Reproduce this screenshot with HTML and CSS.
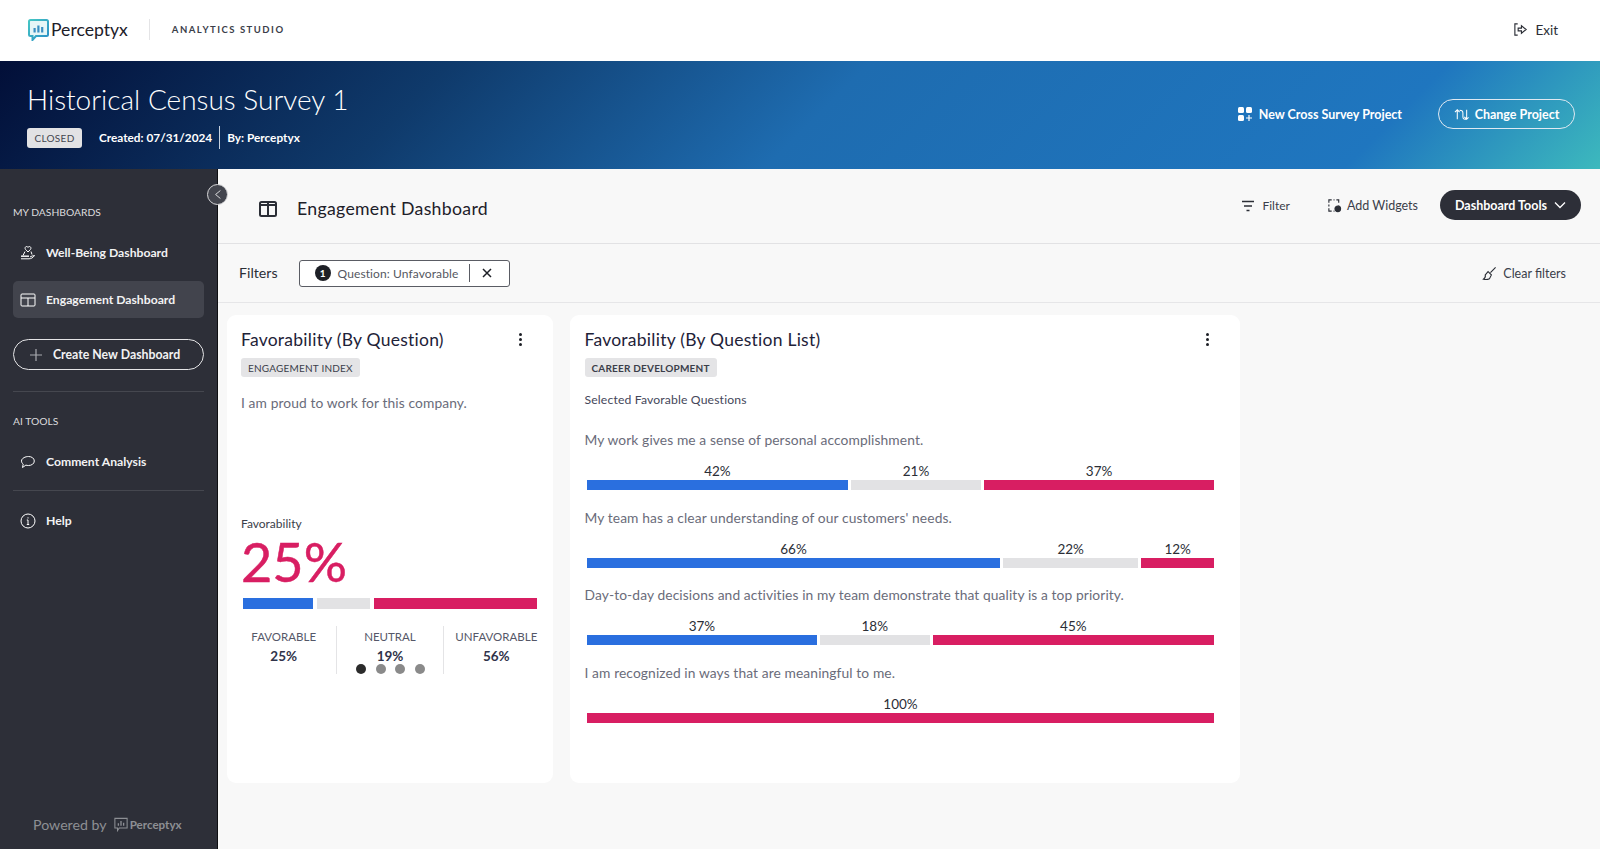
FILE: index.html
```html
<!DOCTYPE html>
<html lang="en">
<head>
<meta charset="utf-8">
<title>Perceptyx Analytics Studio</title>
<link rel="stylesheet" href="styles.css">
</head>
<body>
<header class="topbar">
  <div class="brand">
    <svg class="logo" viewBox="0 0 21 22" width="21" height="22"><defs><linearGradient id="lg" x1="0" y1="0" x2="1" y2="1"><stop offset="0" stop-color="#45c6c4"/><stop offset="1" stop-color="#2a8ec6"/></linearGradient></defs><path d="M2.500 1h16A1.500 1.500 0 0 1 20 2.500v13a1.500 1.500 0 0 1-1.500 1.500H8l-3.500 4v-4h-2A1.500 1.500 0 0 1 1 15.500v-13A1.500 1.500 0 0 1 2.500 1z" fill="#e6f6f7" stroke="url(#lg)" stroke-width="2"/><path d="M5.500 9h2.200v4.500H5.500zM9.300 6.500h2.200v7H9.300zM13.100 8h2.200v5.500h-2.200z" fill="#3b8fc2"/></svg>
    <span class="brand-name">Perceptyx</span>
    <span class="brand-sep"></span>
    <span class="studio">ANALYTICS STUDIO</span>
  </div>
  <a class="exit">
    <svg viewBox="0 0 16 16" width="15" height="15" fill="none" stroke="#2b2e36" stroke-width="1.200"><path d="M5 2H2v12h3"/><path d="M5.500 6.500H9V4l5 4-5 4V9.500H5.500z"/></svg>
    Exit
  </a>
</header>

<section class="banner">
  <div class="banner-left">
    <h1>Historical Census Survey 1</h1>
    <div class="meta">
      <span class="closed">CLOSED</span>
      <span class="created">Created: 07/31/2024</span>
      <span class="by">By: Perceptyx</span>
    </div>
  </div>
  <div class="banner-right">
    <a class="cross">
      <svg viewBox="0 0 14 14" width="14" height="14" fill="#fff"><rect x="0" y="0" width="6" height="6" rx="1.500"/><rect x="8" y="0" width="6" height="6" rx="1.500"/><rect x="0" y="8" width="6" height="6" rx="1.500"/><path d="M10.400 8h1.200v2.400H14v1.200h-2.400V14h-1.200v-2.400H8v-1.200h2.400z"/></svg>
      New Cross Survey Project
    </a>
    <a class="change">
      <svg viewBox="0 0 16 16" width="15" height="15" fill="none" stroke="#fff" stroke-width="1.100"><path d="M3.500 13V3M1 5.500 3.500 3 6 5.500M6 3.500c2.500 0 3.500 1 3.500 3V11c0 1 .7 2 2 2s2-1 2-2V3M11 10.500l2.500 2.500 2-2"/></svg>
      Change Project
    </a>
  </div>
</section>

<div class="body">
  <aside class="sidebar">
    <button class="collapse"><svg viewBox="0 0 10 12" width="8" height="11" fill="none" stroke="#fff" stroke-width="1"><path d="M8 1 2 6l6 5"/></svg></button>
    <div class="side-label first">MY DASHBOARDS</div>
    <a class="side-item">
      <svg viewBox="0 0 16 16" width="16" height="16" fill="none" stroke="#fff" stroke-width="1"><path d="M8 7 5.600 4.500C4.500 3.200 5.300 1.500 6.600 1.500c.7 0 1.200.4 1.400.9.200-.5.700-.9 1.400-.9 1.300 0 2.100 1.700 1 3z"/><path d="M5 6.500 3 10.500M11 6.500l1 3"/><path d="M1 11.200h8" stroke-width="1.400"/><path d="M1 13.800h8c2 0 4-1 5.500-3.300-1.500 0-3 .8-4.500 1.500"/></svg>
      Well-Being Dashboard
    </a>
    <a class="side-item active">
      <svg viewBox="0 0 16 16" width="16" height="16" fill="none" stroke="#fff" stroke-width="1"><rect x="1" y="2" width="14" height="12" rx="1"/><path d="M1 6h14M8 6v8"/></svg>
      Engagement Dashboard
    </a>
    <a class="create">
      <svg viewBox="0 0 12 12" width="12" height="12" fill="none" stroke="#a9abb0" stroke-width="1.200"><path d="M6 0v12M0 6h12"/></svg>
      Create New Dashboard
    </a>
    <div class="side-rule"></div>
    <div class="side-label">AI TOOLS</div>
    <a class="side-item comment">
      <svg viewBox="0 0 16 16" width="16" height="16" fill="none" stroke="#fff" stroke-width="1"><path d="M8.500 2.500c3 0 5.800 1.700 5.800 4.500S11.500 11.500 8.500 11.500c-1 0-1.800-.1-2.600-.4L2.500 13.500l.7-3.400C2 9.200 1.500 8.100 1.500 7c0-2.800 4-4.500 7-4.500z"/></svg>
      Comment Analysis
    </a>
    <div class="side-rule tight"></div>
    <a class="side-item help">
      <svg viewBox="0 0 16 16" width="16" height="16" fill="none" stroke="#fff" stroke-width="1"><circle cx="8" cy="8" r="7"/><path d="M8 7v4.500M6.800 7H8M6.800 11.500h2.400M8 4.300v1.200"/></svg>
      Help
    </a>
    <div class="powered">
      Powered by
      <svg viewBox="0 0 16 16" width="14" height="15" fill="none" stroke="#8d8f94" stroke-width="1.200"><path d="M1 1h14v11H6l-2 3v-3H1z"/><path d="M5 9.500V6.500M8 9.500V4M11 9.500V6" stroke-width="1.500"/></svg>
      <span class="powered-name">Perceptyx</span>
    </div>
  </aside>

  <main class="main">
    <div class="page-head">
      <div class="page-title">
        <svg viewBox="0 0 18 16" width="18" height="16" fill="none" stroke="#2b2e36" stroke-width="2"><rect x="1" y="1" width="16" height="14" rx="1.500"/><path d="M9 1v14M1 4h16"/></svg>
        <h2>Engagement Dashboard</h2>
      </div>
      <div class="page-tools">
        <a class="tool filter-tool">
          <svg viewBox="0 0 14 12" width="14" height="12" fill="none" stroke="#2b2e36" stroke-width="1.300"><path d="M1 1.500h12M3 6h8M5.500 10.500h3"/></svg>
          Filter
        </a>
        <a class="tool">
          <svg viewBox="0 0 16 16" width="15" height="15" fill="none" stroke="#2b2e36" stroke-width="1.200"><path d="M10 2h2.500v3M12.500 7.500V8M2 5V2h3M7 2h1M2 7v2M2 11v3h3M7 14h1"/><circle cx="11.500" cy="11.500" r="3" fill="#2b2e36"/></svg>
          Add Widgets
        </a>
        <a class="tools-btn">
          Dashboard Tools
          <svg viewBox="0 0 12 8" width="12" height="8" fill="none" stroke="#fff" stroke-width="1.300"><path d="M1 1.500 6 6.500l5-5"/></svg>
        </a>
      </div>
    </div>

    <div class="filter-row">
      <span class="filters-label">Filters</span>
      <div class="chip">
        <span class="chip-num">1</span>
        <span class="chip-text">Question: Unfavorable</span>
        <span class="chip-sep"></span>
        <svg viewBox="0 0 10 10" width="10" height="10" fill="none" stroke="#1d1f26" stroke-width="1.500"><path d="M1 1l8 8M9 1 1 9"/></svg>
      </div>
      <a class="clear">
        <svg viewBox="0 0 16 16" width="15" height="15" fill="none" stroke="#2b2e36" stroke-width="1.200"><path d="M14.500 1.500 9 7M6.500 6 10 9.500 8 13.500C6 14.500 3 14.500 1.500 14 3 13 4 11.500 3.500 9.500z"/></svg>
        Clear filters
      </a>
    </div>

    <div class="cards">
      <article class="card card-one">
        <div class="card-head">
          <h3>Favorability (By Question)</h3>
          <span class="kebab"><i></i><i></i><i></i></span>
        </div>
        <span class="tag">ENGAGEMENT INDEX</span>
        <p class="question one-q">I am proud to work for this company.</p>
        <div class="fav-label">Favorability</div>
        <div class="big">25%</div>
        <div class="bar thick">
          <span class="seg blue" style="flex-grow:24.500"></span>
          <span class="seg gray" style="flex-grow:18.500"></span>
          <span class="seg pink" style="flex-grow:56.800"></span>
        </div>
        <div class="stats">
          <div class="stat"><span class="stat-name">FAVORABLE</span><span class="stat-val">25%</span></div>
          <div class="stat"><span class="stat-name">NEUTRAL</span><span class="stat-val">19%</span></div>
          <div class="stat"><span class="stat-name">UNFAVORABLE</span><span class="stat-val">56%</span></div>
          <div class="dots"><i class="on"></i><i></i><i></i><i></i></div>
        </div>
      </article>

      <article class="card card-two">
        <div class="card-head">
          <h3>Favorability (By Question List)</h3>
          <span class="kebab"><i></i><i></i><i></i></span>
        </div>
        <span class="tag strong">CAREER DEVELOPMENT</span>
        <div class="selected">Selected Favorable Questions</div>

        <div class="q-row">
          <p class="question">My work gives me a sense of personal accomplishment.</p>
          <div class="labels">
            <span style="flex-grow:42">42%</span><span style="flex-grow:21">21%</span><span style="flex-grow:37">37%</span>
          </div>
          <div class="bar">
            <span class="seg blue" style="flex-grow:42"></span><span class="seg gray" style="flex-grow:21"></span><span class="seg pink" style="flex-grow:37"></span>
          </div>
        </div>
        <div class="q-row">
          <p class="question">My team has a clear understanding of our customers' needs.</p>
          <div class="labels">
            <span style="flex-grow:66.500">66%</span><span style="flex-grow:21.800">22%</span><span style="flex-grow:11.700">12%</span>
          </div>
          <div class="bar">
            <span class="seg blue" style="flex-grow:66.500"></span><span class="seg gray" style="flex-grow:21.800"></span><span class="seg pink" style="flex-grow:11.700"></span>
          </div>
        </div>
        <div class="q-row">
          <p class="question">Day-to-day decisions and activities in my team demonstrate that quality is a top priority.</p>
          <div class="labels">
            <span style="flex-grow:37">37%</span><span style="flex-grow:17.700">18%</span><span style="flex-grow:45.300">45%</span>
          </div>
          <div class="bar">
            <span class="seg blue" style="flex-grow:37"></span><span class="seg gray" style="flex-grow:17.700"></span><span class="seg pink" style="flex-grow:45.300"></span>
          </div>
        </div>
        <div class="q-row">
          <p class="question">I am recognized in ways that are meaningful to me.</p>
          <div class="labels"><span style="flex-grow:100">100%</span></div>
          <div class="bar"><span class="seg pink" style="flex-grow:100"></span></div>
        </div>
      </article>
    </div>
  </main>
</div>
</body>
</html>
```
FILE: styles.css
```css
* { box-sizing: border-box; }
html, body { margin: 0; height: 100%; }
body {
  width: 1600px;
  height: 849px;
  overflow: hidden;
  display: flex;
  flex-direction: column;
  font-family: Lato, "Noto Sans", sans-serif;
  color: #1e2233;
  background: #f8f8f8;
}
svg { flex: none; display: block; }
h1, h2, h3, p { margin: 0; font-weight: 400; }

.topbar {
  height: 61px;
  flex: none;
  background: #fff;
  display: flex;
  align-items: center;
  justify-content: space-between;
  padding: 0 42px 2px 28px;
}
.brand { display: flex; align-items: center; }
.brand-name { font-size: 17.600px; margin-left: 2px; color: #1d2029; }
.brand-sep { width: 1px; height: 21px; background: #e4e4e6; margin: 0 22px 0 21px; }
.studio { font-size: 9.500px; font-weight: 700; letter-spacing: 1.500px; color: #3b3e4a; }
.exit { display: flex; align-items: center; gap: 7px; font-size: 13.500px; color: #2b2e36; }

.banner {
  height: 108px;
  flex: none;
  background: linear-gradient(135deg, #020f38 0%, #0f3a6b 26.600%, #1e6cb0 51%, #1f76bf 85%, #3db9bd 100%);
  display: flex;
  justify-content: space-between;
  padding: 0 25px 0 27px;
  color: #fff;
}
.banner-left { padding-top: 20px; }
h1 { font-size: 28px; line-height: 36px; font-weight: 300; }
.meta { display: flex; align-items: center; margin-top: 9px; font-size: 11.800px; font-weight: 700; }
.closed {
  background: #e2e2e4;
  color: #44464f;
  border-radius: 3px;
  font-size: 10px;
  font-weight: 400;
  letter-spacing: .3px;
  width: 55px;
  height: 20px;
  display: flex;
  align-items: center;
  justify-content: center;
  margin-right: 17px;
}
.created { padding-right: 7px; border-right: 1px solid #c8d2e0; line-height: 23px; }
.by { padding-left: 7px; }
.banner-right { display: flex; align-items: center; padding-bottom: 2px; }
.cross { display: flex; align-items: center; gap: 7px; font-size: 12.500px; font-weight: 700; margin-right: 36px; }
.change {
  width: 137px;
  height: 30px;
  border: 1px solid #dfe9f2;
  border-radius: 15px;
  display: flex;
  align-items: center;
  justify-content: center;
  gap: 6px;
  font-size: 12.500px;
  font-weight: 700;
}

.body { flex: 1; display: flex; min-height: 0; }
.sidebar {
  width: 218px;
  flex: none;
  background: #2d2f38;
  border-right: 1px solid #0e0f12;
  padding: 0 13px 0 13px;
  position: relative;
  display: flex;
  flex-direction: column;
  color: #fff;
}
.collapse {
  position: absolute;
  left: 207px;
  top: 15px;
  width: 21px;
  height: 21px;
  padding: 0;
  border-radius: 50%;
  border: 1px solid #d8d8da;
  background: #43454e;
  display: flex;
  align-items: center;
  justify-content: center;
  z-index: 2;
}
.side-label { font-size: 10.300px; color: #dcdcde; line-height: 13px; margin-top: 23px; }
.side-label.first { margin-top: 37px; }
.side-item {
  display: flex;
  align-items: center;
  gap: 10px;
  height: 37px;
  padding-left: 7px;
  border-radius: 5px;
  font-size: 12.200px;
  font-weight: 700;
  color: #f2f2f3;
}
.side-item:nth-of-type(1) { margin-top: 15px; }
.side-item.active { background: #42444d; margin-top: 10px; }
.create {
  margin-top: 21px;
  height: 31px;
  flex: none;
  border: 1px solid #e4e4e6;
  border-radius: 16px;
  display: flex;
  align-items: center;
  gap: 11px;
  padding-left: 16px;
  font-size: 12.300px;
  font-weight: 700;
  color: #f2f2f3;
}
.side-rule { height: 1px; background: #45474f; margin-top: 21px; flex: none; }
.side-item.comment { margin-top: 15px; }
.side-rule.tight { margin-top: 10px; }
.side-item.help { margin-top: 11px; }
.powered {
  margin-top: auto;
  margin-bottom: 16px;
  padding-left: 20px;
  display: flex;
  align-items: center;
  font-size: 14.200px;
  color: #8d8f94;
  gap: 7px;
}
.powered-name { font-size: 11.600px; font-weight: 700; margin-left: -5px; }

.main { flex: 1; min-width: 0; display: flex; flex-direction: column; }
.page-head {
  height: 75px;
  flex: none;
  display: flex;
  align-items: center;
  justify-content: space-between;
  padding: 0 19px 2px 41px;
  border-bottom: 1px solid #e2e2e4;
}
.page-title { display: flex; align-items: center; gap: 20px; margin-top: 7px; }
h2 { font-size: 17.700px; color: #1d2029; letter-spacing: .3px; font-weight: 400; }
.page-tools { display: flex; align-items: center; }
.tool { display: flex; align-items: center; gap: 5px; font-size: 12.500px; color: #3b3e4a; margin-right: 22px; }
.tool svg { margin-top: 1px; }
.filter-tool { margin-right: 37px; gap: 7px; font-size: 12px; }
.tools-btn {
  width: 141px;
  height: 30px;
  border-radius: 15px;
  background: #2d2f38;
  color: #fff;
  font-size: 12.500px;
  font-weight: 700;
  display: flex;
  align-items: center;
  justify-content: center;
  gap: 7px;
}
.filter-row {
  height: 59px;
  flex: none;
  display: flex;
  align-items: center;
  padding: 0 34px 0 21px;
  border-bottom: 1px solid #e6e6e8;
}
.filters-label { font-size: 14.200px; color: #2b2e36; margin-right: 21px; margin-top: -2px; }
.chip {
  height: 27px;
  width: 211px;
  background: #fff;
  border: 1px solid #5a5c64;
  border-radius: 3px;
  display: flex;
  align-items: center;
  padding-left: 15px;
}
.chip-num {
  width: 16px;
  height: 16px;
  border-radius: 50%;
  background: #1d1f26;
  color: #fff;
  font-size: 10px;
  font-weight: 700;
  display: flex;
  align-items: center;
  justify-content: center;
  margin-right: 7px;
}
.chip-text { font-size: 12px; color: #55575f; letter-spacing: .1px; }
.chip-sep { width: 1px; height: 18px; background: #5a5c64; margin: 0 12px 0 11px; }
.clear { margin-left: auto; display: flex; align-items: center; gap: 6px; font-size: 12.500px; color: #3b3e4a; }

.cards { display: flex; gap: 17px; padding: 12px 0 0 9px; }
.card { background: #fff; border-radius: 9px; height: 468px; padding: 12px 14px 0 14.500px; display: flex; flex-direction: column; align-items: flex-start; position: relative; }
.card-one { width: 326px; padding: 12px 15px 0 14px; }
.card-two { width: 670px; }
.card-head { width: 100%; display: flex; justify-content: space-between; align-items: center; height: 24px; padding-right: 17px; }
.card-one .card-head { padding-right: 16px; }
h3 { font-size: 17.500px; color: #1e2238; letter-spacing: .25px; }
.kebab { display: flex; flex-direction: column; gap: 2px; }
.kebab i { width: 3px; height: 3px; border-radius: 50%; background: #1d1f26; }
.tag {
  margin-top: 7px;
  background: #e4e4e6;
  border-radius: 3px;
  height: 19px;
  padding: 0 7px;
  display: flex;
  align-items: center;
  font-size: 10px;
  color: #3b3e4a;
  letter-spacing: .2px;
}
.tag.strong { font-weight: 700; }
.question { font-size: 13.800px; color: #6a6c7a; line-height: 18px; letter-spacing: .1px; }
.one-q { margin-top: 17px; }
.fav-label { margin-top: 104px; font-size: 12px; color: #3b3e4a; line-height: 16px; }
.big { font-size: 54px; line-height: 56px; color: #d81e62; font-weight: 400; margin-top: 2px; -webkit-text-stroke: .5px #d81e62; }
.bar { display: flex; gap: 3px; height: 10px; width: 627px; margin-left: 2.500px; }
.bar.thick { height: 11px; width: 294px; gap: 3.500px; margin-top: 8px; margin-left: 2px; }
.seg { display: block; flex: 1 1 0; }
.blue { background: #2a6fdf; }
.gray { background: #e2e2e4; }
.pink { background: #d81e62; }
.stats { width: 318px; margin: 17px 0 0 -10px; display: flex; position: relative; height: 48px; }
.stat { flex: 1 1 0; display: flex; flex-direction: column; align-items: center; border-left: 1px solid #e4e4e6; font-size: 11.500px; }
.stat:first-child { border-left: 0; }
.stat-name { color: #555768; line-height: 14px; margin-top: 4px; }
.stat-val { font-size: 13.500px; font-weight: 700; color: #30334a; margin-top: 4px; line-height: 16px; }
.dots { position: absolute; left: 125px; top: 38px; display: flex; gap: 9.500px; }
.dots i { width: 10px; height: 10px; border-radius: 50%; background: #8a8a8a; }
.dots i.on { background: #2b2b2b; }
.selected { margin-top: 15px; font-size: 12.200px; color: #45475a; line-height: 16px; letter-spacing: .15px; }
.q-row { width: 100%; height: 77.500px; }
.selected + .q-row { margin-top: 23px; }
.q-row .question { height: 24px; }
.labels { display: flex; gap: 3px; width: 627px; margin-left: 2.500px; font-size: 13.500px; line-height: 18px; color: #2b2e36; text-align: center; margin-top: 7px; }
.labels span { flex: 1 1 0; }
```
